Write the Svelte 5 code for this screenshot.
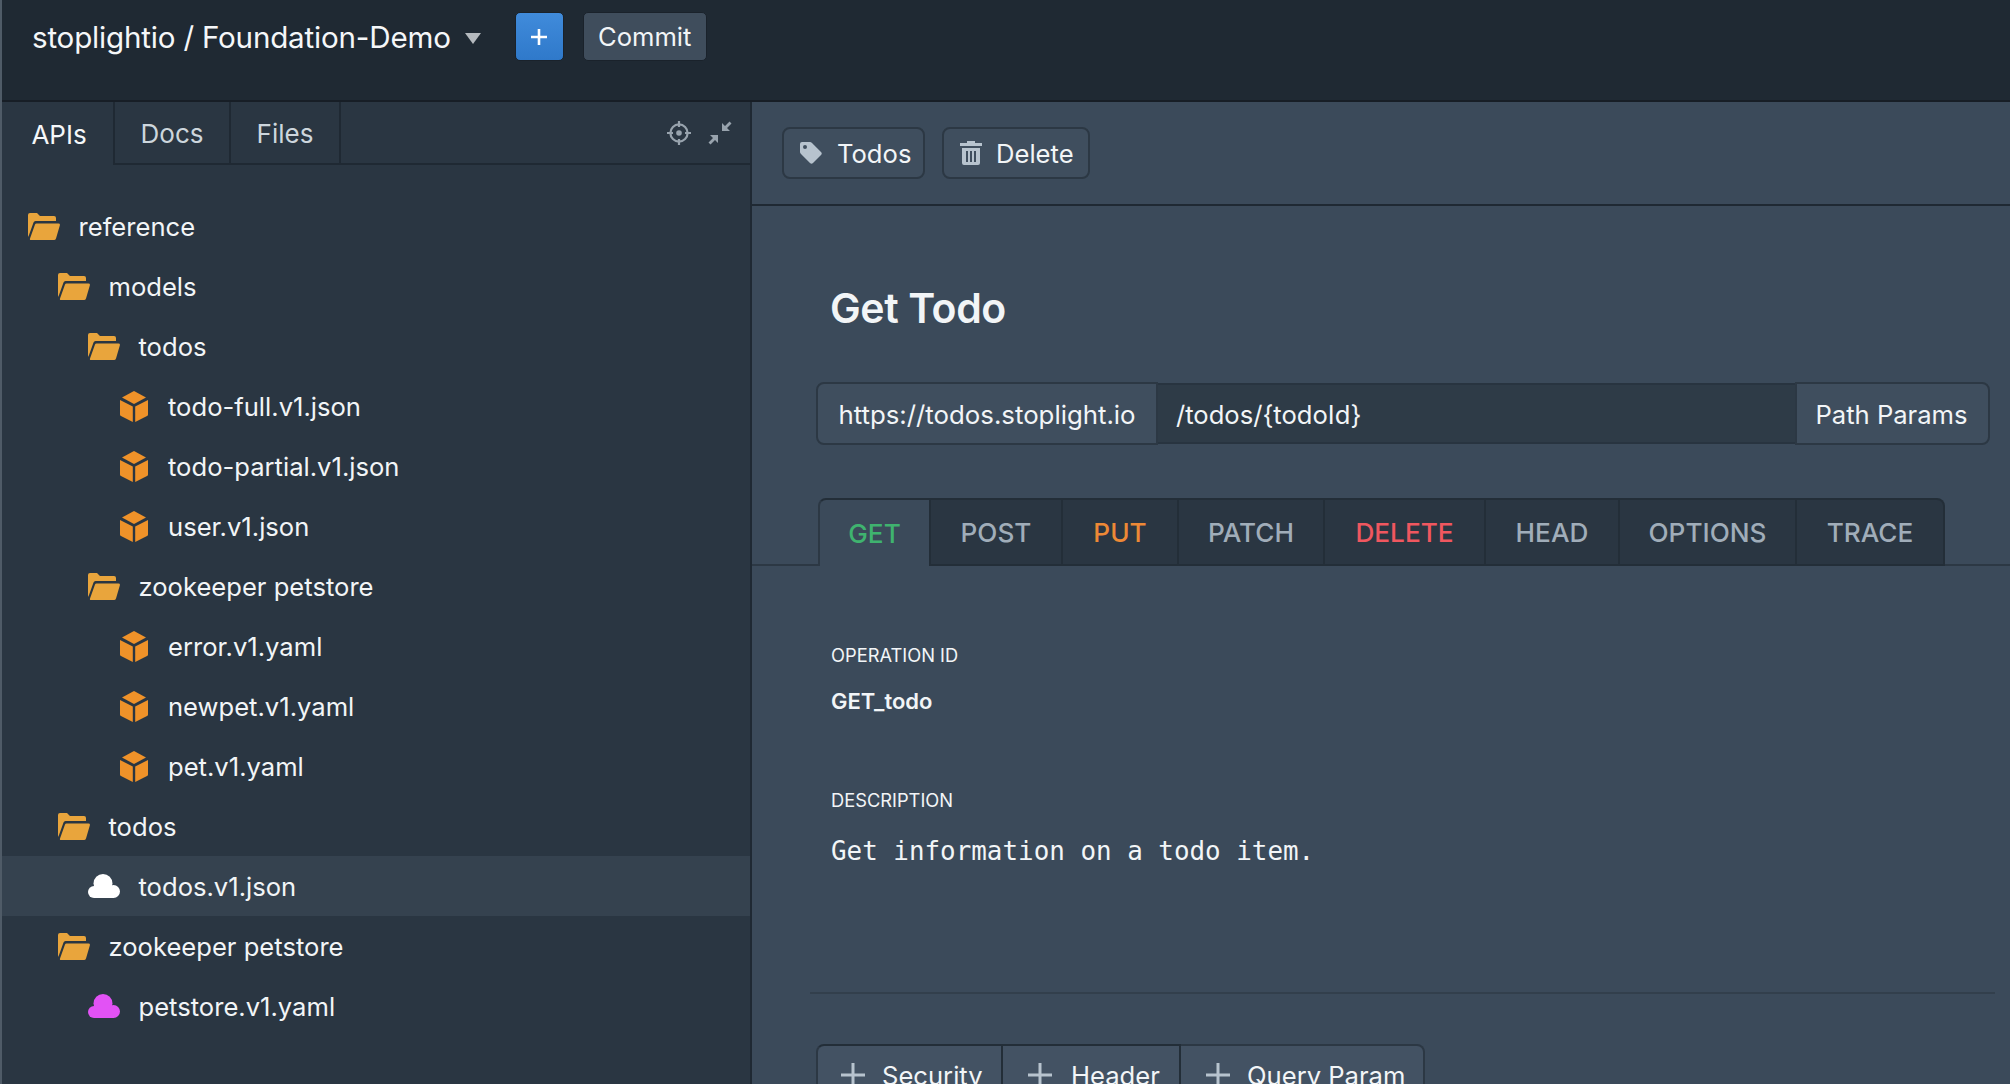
<script>
  const tree = [
    { name: 'reference', level: 0, icon: 'folder' },
    { name: 'models', level: 1, icon: 'folder' },
    { name: 'todos', level: 2, icon: 'folder' },
    { name: 'todo-full.v1.json', level: 3, icon: 'cube' },
    { name: 'todo-partial.v1.json', level: 3, icon: 'cube' },
    { name: 'user.v1.json', level: 3, icon: 'cube' },
    { name: 'zookeeper petstore', level: 2, icon: 'folder' },
    { name: 'error.v1.yaml', level: 3, icon: 'cube' },
    { name: 'newpet.v1.yaml', level: 3, icon: 'cube' },
    { name: 'pet.v1.yaml', level: 3, icon: 'cube' },
    { name: 'todos', level: 1, icon: 'folder' },
    { name: 'todos.v1.json', level: 2, icon: 'cloud', color: '#ffffff', active: true },
    { name: 'zookeeper petstore', level: 1, icon: 'folder' },
    { name: 'petstore.v1.yaml', level: 2, icon: 'cloud', color: '#e252f5' }
  ];

  const methods = [
    { name: 'GET', width: 113, cls: 'get' },
    { name: 'POST', width: 132 },
    { name: 'PUT', width: 116, cls: 'put' },
    { name: 'PATCH', width: 146 },
    { name: 'DELETE', width: 161, cls: 'delete' },
    { name: 'HEAD', width: 134 },
    { name: 'OPTIONS', width: 177 },
    { name: 'TRACE', width: 148 }
  ];

  const adders = [
    { name: 'Security', width: 187, pad: 23, gap: 17 },
    { name: 'Header', width: 178, pad: 25, gap: 19 },
    { name: 'Query Param', width: 244, pad: 25, gap: 17 }
  ];
</script>

<div class="app">
  <header class="topbar">
    <span class="project">stoplightio / Foundation-Demo</span>
    <svg class="caret" width="16" height="11" viewBox="0 0 16 11"><path d="M0 0h16L8 11z" fill="#b4b9be" /></svg>
    <button class="plus-btn" aria-label="Add">
      <svg width="18" height="18" viewBox="0 0 18 18"><path d="M9 1v16M1 9h16" stroke="#fff" stroke-width="2.6" /></svg>
    </button>
    <button class="commit-btn">Commit</button>
  </header>

  <div class="body">
    <aside class="sidebar">
      <nav class="side-tabs">
        <span class="side-tab on">APIs</span>
        <span class="side-tab">Docs</span>
        <span class="side-tab">Files</span>
        <div class="side-tools">
          <svg width="24" height="24" viewBox="0 0 24 24" fill="none" stroke="#98a3ad" stroke-width="2.2">
            <circle cx="12" cy="12" r="8.6" />
            <path d="M12 0v6M12 18v6M0 12h6M18 12h6" />
            <circle cx="12" cy="12" r="2.8" fill="#98a3ad" stroke="none" />
          </svg>
          <svg width="24" height="24" viewBox="0 0 24 24" fill="#98a3ad" stroke="none">
            <path d="M14 3v8h8l-3-3 4.5-4.5-2-2L17 6z" transform="translate(0 -1)" />
            <path d="M10 21v-8H2l3 3-4.5 4.500 2 2L7 18z" transform="translate(0 1)" />
          </svg>
        </div>
      </nav>

      <ul class="tree">
        {#each tree as item}
          <li class="row" class:active={item.active} style="padding-left: {26 + item.level * 30}px">
            {#if item.icon === 'folder'}
              <svg class="ico" width="32" height="27" viewBox="0 0 32 27" fill="#e9a53c">
                <path d="M0 2Q0 0 2 0H9L12 3H26Q28 3 28 5V8H7.500Q6 8 5.500 9.500L1 22 0 24z" />
                <path d="M8.500 10.500H30.500Q32.400 10.500 31.800 12.500L28 25.500Q27.500 27 26 27H3Q1.500 27 2 25.500L7 11.500Q7.300 10.500 8.500 10.500z" />
              </svg>
            {:else if item.icon === 'cube'}
              <svg class="ico cube" width="28" height="31" viewBox="0 0 28 31" fill="#ef9229">
                <path d="M14 0 26 6.500 14 13 2 6.500z" />
                <path d="M0 9 12.800 15.500V31L1 25Q0 24.500 0 23.500z" />
                <path d="M28 9 15.200 15.500V31L27 25Q28 24.500 28 23.500z" />
              </svg>
            {:else}
              <svg class="ico" width="32" height="24" viewBox="0 0 32 24" fill={item.color}>
                <circle cx="15" cy="9.500" r="9.500" />
                <circle cx="6" cy="18" r="6" />
                <circle cx="25.500" cy="17.500" r="6.500" />
                <rect x="6" y="12" width="20" height="12" />
              </svg>
            {/if}
            <span>{item.name}</span>
          </li>
        {/each}
      </ul>
    </aside>

    <main class="panel">
      <div class="toolbar">
        <button class="tool-btn todos">
          <svg width="22" height="22" viewBox="0 0 22 22" fill="#b7c3ce" fill-rule="evenodd">
            <path d="M2 0H10Q11 0 12 1L21 10Q22.500 11.500 21 13L13 21Q11.500 22.500 10 21L1 12Q0 11 0 10V2Q0 0 2 0ZM5 3A2 2 0 1 0 5 7 2 2 0 1 0 5 3Z" />
          </svg>
          Todos
        </button>
        <button class="tool-btn del">
          <svg width="22" height="24" viewBox="0 0 22 24" fill="#b7c3ce" fill-rule="evenodd">
            <path d="M7 0H15V2H22V5H0V2H7Z" />
            <path d="M2 7H20V22Q20 24 18 24H4Q2 24 2 22ZM6 10V21H8V10ZM10 10V21H12V10ZM14 10V21H16V10Z" />
          </svg>
          Delete
        </button>
      </div>

      <h1>Get Todo</h1>

      <div class="url-row">
        <span class="host">https://todos.stoplight.io</span>
        <span class="path">/todos/{'{'}todoId{'}'}</span>
        <button class="params">Path Params</button>
      </div>

      <div class="methods">
        <div class="method-tabs">
          {#each methods as m}
            <span class="method {m.cls ?? ''}" style="width: {m.width}px">{m.name}</span>
          {/each}
        </div>
      </div>

      <section class="field first">
        <h4>OPERATION ID</h4>
        <p class="value">GET_todo</p>
      </section>
      <section class="field second">
        <h4>DESCRIPTION</h4>
        <p class="mono">Get information on a todo item.</p>
      </section>

      <hr />

      <div class="adders">
        {#each adders as a}
          <button class="adder" style="width: {a.width}px; padding-left: {a.pad}px; gap: {a.gap}px">
            <svg width="24" height="24" viewBox="0 0 24 24"><path d="M12 0v24M0 12h24" stroke="#b7c3ce" stroke-width="3" /></svg>
            {a.name}
          </button>
        {/each}
      </div>
    </main>
  </div>
</div>

<style>
  :global(body) {
    margin: 0;
    font-family: Inter, "Noto Sans", sans-serif;
    color: #f2f5f7;
    background: #3b4a5a;
  }

  button {
    font: inherit;
    color: inherit;
    padding: 0;
    cursor: pointer;
  }

  .app {
    height: 1084px;
    overflow: hidden;
    border-left: 2px solid #4f5b67;
    box-sizing: border-box;
    display: flex;
    flex-direction: column;
  }

  .topbar {
    height: 102px;
    box-sizing: border-box;
    background: #1f2933;
    border-bottom: 2px solid #171e26;
    display: flex;
    align-items: flex-start;
    padding: 12px 0 0 30px;
    flex: none;
  }

  .project {
    font-size: 29.6px;
    line-height: 50px;
    letter-spacing: -0.2px;
    color: #f5f7f9;
  }

  .caret {
    margin: 21px 0 0 14px;
  }

  .plus-btn {
    width: 49px;
    height: 49px;
    margin-left: 34px;
    border: 1px solid #1a222b;
    border-radius: 5px;
    background: linear-gradient(#408bdb, #2f79ca);
    display: flex;
    align-items: center;
    justify-content: center;
  }

  .commit-btn {
    width: 124px;
    height: 49px;
    margin-left: 19px;
    border: 1px solid #1a222b;
    border-radius: 5px;
    background: #3f4d5c;
    font-size: 25.6px;
  }

  .body {
    flex: 1;
    display: flex;
    min-height: 0;
  }

  .sidebar {
    width: 748px;
    flex: none;
    background: #2a3642;
    border-right: 2px solid #1f2933;
    box-sizing: content-box;
  }

  .side-tabs {
    display: flex;
    height: 63px;
    box-sizing: border-box;
    border-bottom: 2px solid #1f2933;
    font-size: 26px;
  }

  .side-tab {
    box-sizing: border-box;
    display: flex;
    align-items: center;
    justify-content: center;
    padding-top: 2px;
    border-right: 2px solid #1f2933;
    width: 116px;
    color: #cdd6dd;
  }

  .side-tab:nth-child(1) {
    width: 113px;
    height: 63px;
    padding-left: 3px;
    background: #2a3642;
    color: #f5f7f9;
  }

  .side-tab:nth-child(3) {
    width: 110px;
  }

  .side-tools {
    margin-left: auto;
    margin-right: 18px;
    display: flex;
    align-items: center;
    gap: 17px;
  }

  .tree {
    list-style: none;
    margin: 31px 0 0;
    padding: 0;
  }

  .row {
    height: 60px;
    display: flex;
    align-items: center;
    font-size: 25.6px;
    color: #f2f5f7;
  }

  .row.active {
    background: #35424f;
  }

  .ico {
    flex: none;
    margin-right: 18.5px;
  }

  .ico.cube {
    margin-left: 2px;
    margin-right: 20px;
  }

  .panel {
    flex: 1;
    min-width: 0;
    background: #3b4a5a;
  }

  .toolbar {
    height: 104px;
    box-sizing: border-box;
    border-bottom: 2px solid #1f2933;
    padding: 0 30px;
    display: flex;
    align-items: center;
    gap: 17px;
  }

  .tool-btn {
    height: 52px;
    box-sizing: border-box;
    border: 2px solid #2c3844;
    border-radius: 8px;
    background: #3f4e5e;
    font-size: 25.6px;
    display: flex;
    align-items: center;
    gap: 15px;
    padding: 0 14px 0 16px;
  }

  .tool-btn svg {
    flex: none;
  }

  .tool-btn.todos {
    width: 143px;
  }

  .tool-btn.del {
    width: 148px;
    gap: 14px;
  }

  h1 {
    margin: 78px 0 0 78px;
    font-size: 41px;
    line-height: 48px;
    font-weight: 600;
    letter-spacing: -0.4px;
  }

  .url-row {
    margin: 50px 20px 0 64px;
    height: 63px;
    display: flex;
    align-items: center;
    font-size: 25.6px;
  }

  .host {
    width: 342px;
    height: 63px;
    box-sizing: border-box;
    background: #3f4e5e;
    border: 2px solid #2c3844;
    border-radius: 8px 0 0 8px;
    padding-top: 1px;
    font-size: 25.8px;
    display: flex;
    align-items: center;
    justify-content: center;
  }

  .path {
    flex: 1;
    height: 61px;
    box-sizing: border-box;
    background: #2e3b47;
    border: 2px solid #283440;
    border-width: 2px 0;
    display: flex;
    align-items: center;
    padding: 1px 0 0 18px;
  }

  .params {
    width: 195px;
    height: 63px;
    box-sizing: border-box;
    background: #3f4e5e;
    border: 2px solid #2c3844;
    border-radius: 0 8px 8px 0;
    padding: 1px 2px 0 0;
  }

  .methods {
    margin-top: 53px;
    border-bottom: 2px solid #2c3844;
    height: 68px;
    box-sizing: border-box;
    padding-left: 66px;
  }

  .method-tabs {
    display: flex;
    height: 68px;
  }

  .method {
    box-sizing: border-box;
    height: 68px;
    background: #2a3642;
    border: 2px solid #232e38;
    border-left: 0;
    display: flex;
    align-items: center;
    justify-content: center;
    font-size: 26.2px;
    font-weight: 500;
    color: #a0adb9;
  }

  .method:first-child {
    border-left: 2px solid #2c3844;
    border-bottom: 0;
    border-top-left-radius: 8px;
  }

  .method:last-child {
    border-top-right-radius: 8px;
  }

  .get {
    background: #3b4a5a;
    color: #3fb36f;
  }

  .put {
    color: #ed8936;
  }

  .delete {
    color: #f0575f;
  }

  .field {
    margin-left: 79px;
  }

  .field.first {
    margin-top: 75px;
  }

  .field.second {
    margin-top: 71px;
  }

  h4 {
    margin: 0;
    font-size: 18.3px;
    line-height: 28px;
    font-weight: 400;
    color: #f2f5f7;
  }

  .value {
    margin: 18px 0 0;
    font-size: 22px;
    line-height: 28px;
    font-weight: 600;
  }

  .mono {
    margin: 19.5px 0 0;
    font-family: "DejaVu Sans Mono", monospace;
    font-size: 25.9px;
    line-height: 34px;
  }

  hr {
    margin: 124.5px 15px 0 58px;
    border: 0;
    border-top: 2px solid #323f4c;
  }

  .adders {
    margin: 50px 0 0 64px;
    display: flex;
  }

  .adder {
    height: 62px;
    box-sizing: border-box;
    background: #435263;
    border: 2px solid #232e38;
    border-left: 0;
    font-size: 25.6px;
    display: flex;
    align-items: center;
  }

  .adder:first-child {
    border-left: 2px solid #2c3844;
    border-top-left-radius: 8px;
  }

  .adder:last-child {
    border-top-right-radius: 8px;
    border-color: #2c3844;
  }
</style>
